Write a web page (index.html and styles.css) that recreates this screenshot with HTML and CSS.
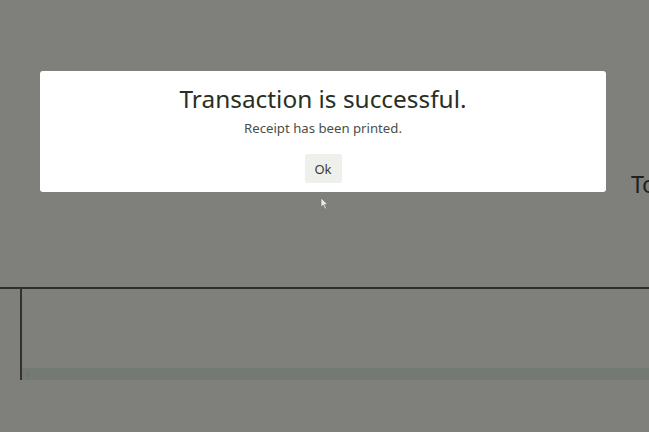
FILE: index.html
```html
<!DOCTYPE html>
<html>
<head>
<meta charset="utf-8">
<link rel="stylesheet" href="styles.css">
</head>
<body>
<div class="page">
  <div class="summary"><span class="total-label">Total</span></div>
  <div class="table">
    <div class="table-body">
      <div class="table-inner"></div>
      <div class="hscroll"><span class="arrow">&#8249;</span></div>
    </div>
  </div>
</div>

<div class="modal">
  <h1 class="modal-title">Transaction is successful.</h1>
  <p class="modal-text">Receipt has been printed.</p>
  <button class="modal-btn">Ok</button>
</div>

<svg class="cursor" width="9" height="13" viewBox="0 0 9 13">
  <path d="M1 1 L1 10 L3.2 8 L5 12 L6.4 11.3 L4.7 7.6 L7.6 7.4 Z" fill="#e9eae6" stroke="#6d6f6a" stroke-width="0.6"/>
</svg>
</body>
</html>
```

FILE: styles.css
```css
html, body {
  margin: 0;
  padding: 0;
  width: 649px;
  height: 432px;
  overflow: hidden;
  background: #7f807b;
  font-family: "Noto Sans", "Open Sans", sans-serif;
}

.page {
  display: flex;
  flex-direction: column;
}

.summary {
  height: 287px;
  padding-top: 168px;
  padding-left: 631px;
  box-sizing: border-box;
  white-space: nowrap;
  flex-shrink: 0;
}

.total-label {
  font-size: 23.5px;
  line-height: 32px;
  color: #1f231c;
  letter-spacing: -0.3px;
}

.table {
  border-top: 2px solid #2c302a;
  padding-left: 20px;
}

.table-body {
  border-left: 2px solid #2f322d;
  height: 91px;
  display: flex;
  flex-direction: column;
}

.table-inner {
  flex: 1;
}

.hscroll {
  height: 12px;
  background: #747973;
  display: flex;
  align-items: center;
  padding-left: 4px;
}

.arrow {
  font-size: 12px;
  line-height: 12px;
  color: #676c66;
}

.modal {
  position: absolute;
  left: 40px;
  top: 71px;
  width: 566px;
  height: 121px;
  box-sizing: border-box;
  background: #ffffff;
  border-radius: 3px;
  display: flex;
  flex-direction: column;
  align-items: center;
  padding-top: 12px;
}

.modal-title {
  margin: 0;
  font-weight: 400;
  font-size: 24.4px;
  line-height: 32px;
  color: #2a2f25;
}

.modal-text {
  margin: 4px 0 0 0;
  font-size: 13.2px;
  line-height: 18px;
  color: #4b4e48;
}

.modal-btn {
  margin-top: 17px;
  width: 37px;
  height: 29px;
  border: none;
  border-radius: 2px;
  background: #eef0ec;
  font-family: inherit;
  font-size: 13px;
  color: #363a33;
  padding: 0;
}

.cursor {
  position: absolute;
  left: 320px;
  top: 197px;
}
```
